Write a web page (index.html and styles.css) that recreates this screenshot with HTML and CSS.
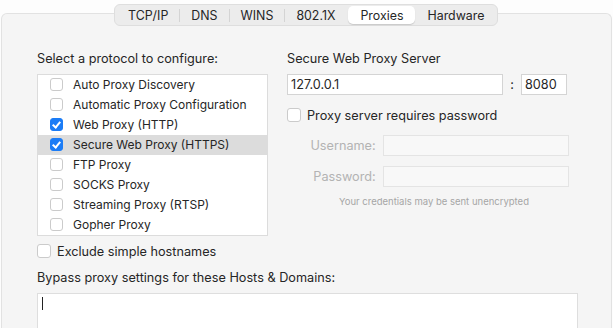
FILE: index.html
```html
<!DOCTYPE html>
<html lang="en">
<head>
    <meta charset="UTF-8">
    <title>Proxies</title>
    <link rel="stylesheet" href="styles.css">
</head>
<body>

    <div class="panel">
        <div class="tabs">
            <div class="tab">TCP/IP</div>
            <div class="tab">DNS</div>
            <div class="tab">WINS</div>
            <div class="tab">802.1X</div>
            <div class="tab active">Proxies</div>
            <div class="tab">Hardware</div>
        </div>

        <div class="columns">
            <div class="left">
                <div class="label">Select a protocol to configure:</div>
                <div class="proto-list">
                    <div class="proto"><span class="check"></span>Auto Proxy Discovery</div>
                    <div class="proto"><span class="check"></span>Automatic Proxy Configuration</div>
                    <div class="proto"><span class="check on"></span>Web Proxy (HTTP)</div>
                    <div class="proto selected"><span class="check on"></span>Secure Web Proxy (HTTPS)</div>
                    <div class="proto"><span class="check"></span>FTP Proxy</div>
                    <div class="proto"><span class="check"></span>SOCKS Proxy</div>
                    <div class="proto"><span class="check"></span>Streaming Proxy (RTSP)</div>
                    <div class="proto"><span class="check"></span>Gopher Proxy</div>
                </div>
                <div class="option exclude"><span class="check big"></span>Exclude simple hostnames</div>
            </div>

            <div class="right">
                <div class="label">Secure Web Proxy Server</div>
                <div class="server-row">
                    <div class="field host">127.0.0.1</div>
                    <span class="colon">:</span>
                    <div class="field port">8080</div>
                </div>
                <div class="option"><span class="check big"></span>Proxy server requires password</div>
                <div class="cred-row">
                    <span class="cred-label">Username:</span>
                    <div class="field disabled"></div>
                </div>
                <div class="cred-row">
                    <span class="cred-label">Password:</span>
                    <div class="field disabled"></div>
                </div>
                <div class="note">Your credentials may be sent unencrypted</div>
            </div>
        </div>

        <div class="label bypass-label">Bypass proxy settings for these Hosts &amp; Domains:</div>
        <div class="bypass"><span class="caret"></span></div>
    </div>

</body>
</html>
```

FILE: styles.css
```css
body {
    font-family: 'Inter', 'Liberation Sans', sans-serif;
    font-size: 12.7px;
    color: #262626;
    background-color: #fdfdfd;
    margin: 0;
    padding: 0;
    overflow: hidden;
}
.panel {
    margin: 13px 0 0 1px;
    width: 541px;
    height: 314px;
    padding: 0 33px 0 35px;
    background-color: #f5f5f5;
    border: 1px solid #e2e2e2;
    border-bottom: none;
    border-radius: 6px 6px 0 0;
}
.tabs {
    display: flex;
    align-items: center;
    width: fit-content;
    height: 20px;
    margin: -10px 0 0 77px;
    background-color: #ececec;
    border: 1px solid #dedede;
    border-radius: 6px;
    font-size: 12.4px;
}
.tab {
    line-height: 13px;
    padding: 0 11px;
    border-left: 1px solid #d4d4d4;
}
.tab:first-child {
    border-left: none;
    padding-left: 13px;
}
.tab:last-child {
    padding-right: 13px;
}
.tab.active {
    background-color: #fff;
    border: none;
    margin: 0 1px 0 2px;
    padding: 3px 12px 2px;
    border-radius: 5px;
    box-shadow: 0 1px 1px rgba(0, 0, 0, 0.15);
}
.tab.active + .tab {
    border-left: none;
}
.columns {
    display: flex;
    gap: 19px;
    margin-top: 25px;
}
.left {
    width: 231px;
}
.right {
    width: 282px;
}
.label {
    line-height: 16px;
    margin-bottom: 7px;
}
.proto-list {
    background-color: #fff;
    border: 1px solid #dcdcdc;
    height: 160px;
}
.proto {
    display: flex;
    align-items: center;
    height: 20px;
    box-sizing: border-box;
    padding: 0 0 1px 12px;
    font-size: 12px;
}
.proto.selected {
    background-color: #dcdcdc;
}
.check {
    width: 11px;
    height: 11px;
    border: 1px solid #cbcbcb;
    border-radius: 3px;
    background-color: #fff;
    margin-right: 10px;
    position: relative;
    flex-shrink: 0;
}
.check.big {
    width: 12px;
    height: 12px;
    margin-right: 6px;
}
.check.on {
    background-color: #1b7cf6;
    border-color: #1b7cf6;
}
.check.on::after {
    content: "";
    position: absolute;
    left: 3px;
    top: 1px;
    width: 3px;
    height: 6px;
    border: solid #fff;
    border-width: 0 2px 2px 0;
    transform: rotate(40deg);
}
.option {
    display: flex;
    align-items: center;
    height: 16px;
}
.exclude {
    margin-top: 7px;
}
.server-row {
    display: flex;
    align-items: center;
    height: 21px;
}
.field {
    background-color: #fff;
    border: 1px solid #d4d4d4;
    box-sizing: border-box;
    height: 21px;
    line-height: 19px;
    padding-left: 3px;
}
.host {
    width: 216px;
}
.colon {
    width: 18px;
    text-align: center;
}
.port {
    width: 46px;
}
.right .option {
    margin-top: 12px;
}
.cred-row {
    display: flex;
    align-items: center;
    margin-top: 10px;
}
.right .option + .cred-row {
    margin-top: 12px;
}
.cred-label {
    width: 89px;
    text-align: right;
    padding-right: 7px;
    color: #b3b3b3;
}
.field.disabled {
    width: 187px;
    height: 21px;
    background-color: #f8f8f8;
    border-color: #e4e4e4;
}
.note {
    font-size: 9.5px;
    color: #a6a6a6;
    text-align: center;
    margin-top: 9px;
    padding-left: 12px;
}
.bypass-label {
    margin-top: 11px;
}
.bypass {
    height: 34px;
    background-color: #fff;
    border: 1px solid #dedede;
}
.caret {
    display: block;
    width: 1px;
    height: 13px;
    background-color: #222;
    margin: 3px 0 0 4px;
}
```
